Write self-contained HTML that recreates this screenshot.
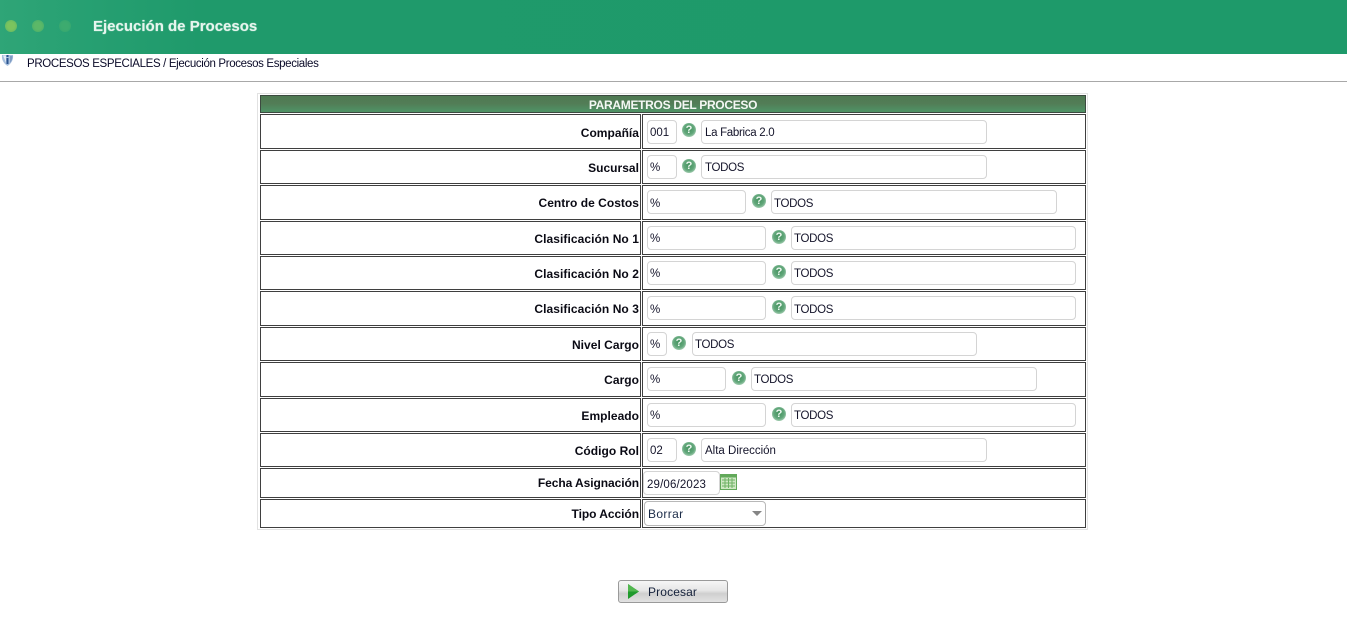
<!DOCTYPE html>
<html lang="es">
<head>
<meta charset="utf-8">
<title>Ejecución de Procesos</title>
<style>
html,body{margin:0;padding:0;background:#fff;width:1347px;height:642px;overflow:hidden}
body{position:relative;font-family:"Liberation Sans",Arial,sans-serif;font-size:12px;color:#000}
div,span,svg{position:absolute;box-sizing:border-box}
#top{left:0;top:0;width:1347px;height:54px;background:linear-gradient(90deg,#2fa577 0,#27a072 80px,#1f9a6b 200px,#1e9a6a 100%)}
.dot{border-radius:50%;width:12px;height:12px;top:20px}
#title{left:93px;top:18px;color:#e6f5ee;font-size:15px;font-weight:bold;font-family:"Liberation Sans",sans-serif;line-height:18px;white-space:nowrap;text-shadow:0 0 1px #bfe6d4}
#crumb{left:27px;top:57px;font-size:11.5px;line-height:14px;white-space:nowrap;color:#0a0a28;letter-spacing:-.35px}
#hr{left:0;top:81px;width:1347px;height:1px;background:#a8a8a8}
#outer{left:257px;top:93px;width:831px;height:437px;border:1px solid #e2e2e2}
#head{left:260px;top:95px;width:826px;height:18px;border:1px solid #3c4a40;background:linear-gradient(#4e7a52 0,#527c56 45%,#4f9466 100%);color:#f4f8f4;font-weight:bold;text-align:center;line-height:18px;letter-spacing:-.3px}
.c{border:1px solid #3f3f3f;background:#fff}
.l{left:260px;width:381px}
.v{left:642px;width:444px}
.t{font-weight:bold;right:708px;white-space:nowrap;line-height:14px;color:#0a0a14;letter-spacing:.03px}
.i{height:24px;border:1px solid #d4d4d4;border-radius:4px;background:#fff;padding-left:2px;line-height:25px;color:#14142a;font-size:11.5px;white-space:nowrap;overflow:hidden}
.d{letter-spacing:-.3px}
.h{width:14px;height:14px;border-radius:50%;background:radial-gradient(circle at 50% 45%,#45935f 0,#62a77b 50%,#b4d7bf 82%,#e6f1e9 100%);color:#eef8f1;font-size:11px;font-weight:bold;line-height:14px;text-align:center}
#btn{left:618px;top:580px;width:110px;height:23px;border:1px solid #9a9a9a;border-radius:3px;background:linear-gradient(#f6f6f6 0,#e6e6e6 45%,#cfcfcf 60%,#e2e2e2 100%);color:#14203a;line-height:22px;padding-left:29px;letter-spacing:.13px}
</style>
</head>
<body>
<div id="top"></div>
<div class="dot" style="left:5px;background:radial-gradient(circle,#7cc45e 40%,#5ab566 100%)"></div>
<div class="dot" style="left:32px;background:radial-gradient(circle,#5cb868 40%,#43ac6a 100%)"></div>
<div class="dot" style="left:59px;background:radial-gradient(circle,#3dab6f 40%,#31a570 100%)"></div>
<div id="title">Ejecución de Procesos</div>

<svg style="left:1px;top:54px" width="13" height="14" viewBox="0 0 13 14">
<path d="M1 1h11c.5 4-1 8-5.500 11C2 9 .5 5 1 1z" fill="#a8c0de"/>
<path d="M2 1.500h3v7z" fill="#e4ecf5"/>
<path d="M9 2h2.500c0 3-.8 5-2.500 7z" fill="#7f9cc4"/>
<rect x="5.500" y="1" width="2" height="2" fill="#2b5590"/>
<rect x="5.500" y="4" width="2" height="6" fill="#2b5590"/>
</svg>
<div id="crumb">PROCESOS ESPECIALES / Ejecución Procesos Especiales</div>
<div id="hr"></div>

<div id="outer"></div>
<div id="head">PARAMETROS DEL PROCESO</div>

<div class="c l" style="top:114px;height:35px"></div><div class="c v" style="top:114px;height:35px"></div>
<div class="c l" style="top:150px;height:34px"></div><div class="c v" style="top:150px;height:34px"></div>
<div class="c l" style="top:185px;height:35px"></div><div class="c v" style="top:185px;height:35px"></div>
<div class="c l" style="top:221px;height:34px"></div><div class="c v" style="top:221px;height:34px"></div>
<div class="c l" style="top:256px;height:34px"></div><div class="c v" style="top:256px;height:34px"></div>
<div class="c l" style="top:291px;height:35px"></div><div class="c v" style="top:291px;height:35px"></div>
<div class="c l" style="top:327px;height:34px"></div><div class="c v" style="top:327px;height:34px"></div>
<div class="c l" style="top:362px;height:35px"></div><div class="c v" style="top:362px;height:35px"></div>
<div class="c l" style="top:398px;height:34px"></div><div class="c v" style="top:398px;height:34px"></div>
<div class="c l" style="top:433px;height:34px"></div><div class="c v" style="top:433px;height:34px"></div>
<div class="c l" style="top:468px;height:30px"></div><div class="c v" style="top:468px;height:30px"></div>
<div class="c l" style="top:499px;height:29px"></div><div class="c v" style="top:499px;height:29px"></div>

<span class="t" style="top:126px">Compañía</span>
<span class="t" style="top:161px">Sucursal</span>
<span class="t" style="top:196px">Centro de Costos</span>
<span class="t" style="top:232px;letter-spacing:.07px">Clasificación No 1</span>
<span class="t" style="top:267px;letter-spacing:.07px">Clasificación No 2</span>
<span class="t" style="top:302px;letter-spacing:.07px">Clasificación No 3</span>
<span class="t" style="top:338px">Nivel Cargo</span>
<span class="t" style="top:373px">Cargo</span>
<span class="t" style="top:409px">Empleado</span>
<span class="t" style="top:444px">Código Rol</span>
<span class="t" style="top:476px;letter-spacing:-.07px">Fecha Asignación</span>
<span class="t" style="top:507px;letter-spacing:-.05px">Tipo Acción</span>

<div class="i" style="left:647px;top:120px;width:30px">001</div><div class="h" style="left:682px;top:123px">?</div><div class="i d" style="left:701px;top:120px;width:286px;padding-left:3px">La Fabrica 2.0</div>
<div class="i" style="left:647px;top:155px;width:30px">%</div><div class="h" style="left:682px;top:159px">?</div><div class="i d" style="left:701px;top:155px;width:286px;padding-left:3px">TODOS</div>
<div class="i" style="left:647px;top:190px;width:99px;line-height:27px">%</div><div class="h" style="left:752px;top:194px">?</div><div class="i d" style="left:771px;top:190px;width:286px;line-height:27px">TODOS</div>
<div class="i" style="left:647px;top:226px;width:119px">%</div><div class="h" style="left:772px;top:230px">?</div><div class="i d" style="left:791px;top:226px;width:285px">TODOS</div>
<div class="i" style="left:647px;top:261px;width:119px">%</div><div class="h" style="left:772px;top:265px">?</div><div class="i d" style="left:791px;top:261px;width:285px">TODOS</div>
<div class="i" style="left:647px;top:296px;width:119px;line-height:27px">%</div><div class="h" style="left:772px;top:300px">?</div><div class="i d" style="left:791px;top:296px;width:285px;line-height:27px">TODOS</div>
<div class="i" style="left:647px;top:332px;width:20px">%</div><div class="h" style="left:672px;top:336px">?</div><div class="i d" style="left:692px;top:332px;width:285px">TODOS</div>
<div class="i" style="left:647px;top:367px;width:79px">%</div><div class="h" style="left:732px;top:371px">?</div><div class="i d" style="left:751px;top:367px;width:286px">TODOS</div>
<div class="i" style="left:647px;top:403px;width:119px">%</div><div class="h" style="left:772px;top:407px">?</div><div class="i d" style="left:791px;top:403px;width:285px">TODOS</div>
<div class="i" style="left:647px;top:438px;width:30px">02</div><div class="h" style="left:682px;top:442px">?</div><div class="i" style="left:701px;top:438px;width:286px;padding-left:3px">Alta Dirección</div>

<div class="i" style="left:643px;top:471px;width:77px;padding-left:3px;letter-spacing:.15px;line-height:26px">29/06/2023</div>
<svg style="left:720px;top:474px" width="17" height="16" viewBox="0 0 17 16">
<rect x=".5" y=".5" width="16" height="15" fill="#cfe8c4" stroke="#62a95a"/>
<rect x="1" y="1" width="15" height="2.500" fill="#62a95a"/>
<path d="M2 6h13M2 9h13M2 12h13M5 4v10M8.500 4v10M12 4v10" stroke="#6fb265" stroke-width="1" fill="none"/>
</svg>

<div class="i" style="left:644px;top:501px;width:122px;height:25px;border-color:#b8b8b8;padding-left:3px;line-height:24px;color:#1c2c48;letter-spacing:.35px;font-size:12px">Borrar</div>
<svg style="left:752px;top:511px" width="10" height="6" viewBox="0 0 10 6"><path d="M0 0h10L5 5z" fill="#858585"/></svg>

<div id="btn">Procesar</div>
<svg style="left:628px;top:584px" width="11" height="15" viewBox="0 0 11 15"><path d="M0 0l11 7.500L0 15z" fill="#1f9a2c"/><path d="M0 0l11 7.500H0z" fill="#52b74f"/></svg>
</body>
</html>
